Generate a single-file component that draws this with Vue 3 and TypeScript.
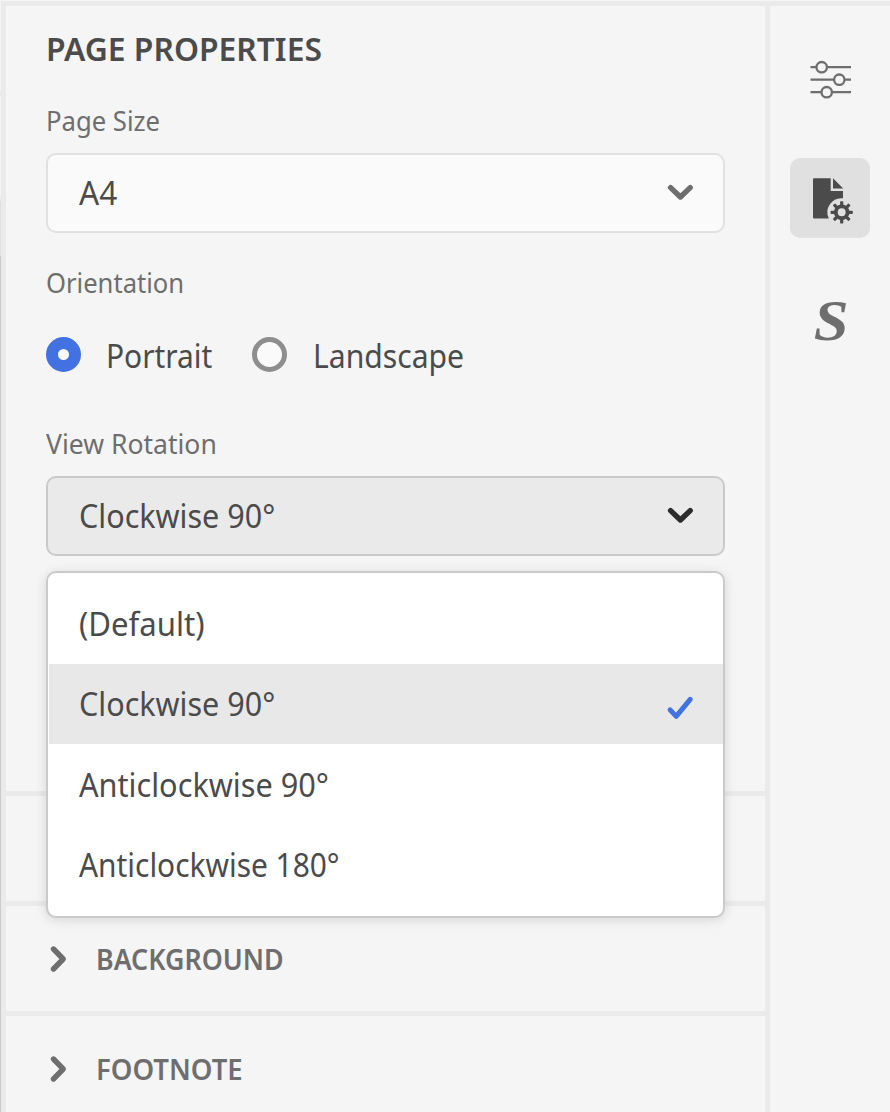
<script setup lang="ts">
import { ref } from 'vue'

interface Option { label: string; width: number }

// Compresses a label horizontally so it occupies the given width.
const vFit = {
  mounted(el: HTMLElement, binding: { value: number }) {
    el.style.transform = `scaleX(${binding.value / el.offsetWidth})`
  },
}

const orientation = ref('Portrait')
const orientations: Option[] = [
  { label: 'Portrait', width: 106.5 },
  { label: 'Landscape', width: 151.5 },
]
const rotation = ref('Clockwise 90°')
const rotations: Option[] = [
  { label: '(Default)', width: 125.5 },
  { label: 'Clockwise 90°', width: 196.5 },
  { label: 'Anticlockwise 90°', width: 250 },
  { label: 'Anticlockwise 180°', width: 260.5 },
]
const sections: Option[] = [
  { label: 'BACKGROUND', width: 187.5 },
  { label: 'FOOTNOTE', width: 146.5 },
]
const teeth = [0, 45, 90, 135, 180, 225, 270, 315]
</script>

<template>
  <div class="app">
    <div class="edge"><i class="edge-a"></i><i class="edge-b"></i><i class="edge-c"></i><i class="edge-d"></i></div>
    <main class="panel">
      <section class="properties">
        <h2 class="title"><span v-fit="275.5" class="fit">PAGE PROPERTIES</span></h2>
        <div class="label size-label"><span v-fit="114.5" class="fit">Page Size</span></div>
        <div class="select">
          <span v-fit="38.5" class="fit">A4</span>
          <svg class="chevron" width="28" height="20" viewBox="0 0 28 20"><path d="M4.6 4.6 14.4 14 24.2 4.6" /></svg>
        </div>
        <div class="label orientation-label"><span v-fit="138" class="fit">Orientation</span></div>
        <div class="radios">
          <div v-for="o in orientations" :key="o.label" class="radio" @click="orientation = o.label">
            <span class="dot" :class="{ on: orientation === o.label }"></span>
            <span v-fit="o.width" class="fit">{{ o.label }}</span>
          </div>
        </div>
        <div class="label rotation-label"><span v-fit="170.5" class="fit">View Rotation</span></div>
        <div class="select open">
          <span v-fit="196.5" class="fit">{{ rotation }}</span>
          <svg class="chevron" width="28" height="20" viewBox="0 0 28 20"><path d="M4.6 4.6 14.4 14 24.2 4.6" /></svg>
          <div class="menu">
            <div v-for="r in rotations" :key="r.label" class="item" :class="{ active: rotation === r.label }">
              <span v-fit="r.width" class="fit">{{ r.label }}</span>
              <svg v-if="rotation === r.label" class="check" width="28" height="26" viewBox="0 0 28 26"><path d="M4.1 14.9 10.2 21.4 24.2 4.3" /></svg>
            </div>
          </div>
        </div>
      </section>
      <section class="section"></section>
      <section v-for="s in sections" :key="s.label" class="section">
        <svg class="arrow" width="20" height="28" viewBox="0 0 20 28"><path d="M5.5 4 15.2 14 5.5 24" /></svg>
        <span v-fit="s.width" class="fit">{{ s.label }}</span>
      </section>
    </main>
    <aside class="rail">
      <div class="tool">
        <svg width="80" height="80" viewBox="0 0 80 80" fill="none" stroke="#6e6e6e" stroke-width="2.3">
          <path d="M20.5 29.1h6M37 29.1h24M20.5 41.6h23.5M54 41.6h7M20.5 54.1h11M42 54.1h19" />
          <circle cx="31.7" cy="29.2" r="5.2" /><circle cx="49.3" cy="41.7" r="5.2" /><circle cx="36.7" cy="54.2" r="5.2" />
        </svg>
      </div>
      <div class="tool selected">
        <svg width="80" height="80" viewBox="0 0 80 80" fill="#4b4b4b">
          <path d="M24 20.2H40.7V33H53V40.3A14 14 0 0 0 38.9 60.5H24a1 1 0 0 1-1-1V21.2a1 1 0 0 1 1-1Z" />
          <path d="M43 20.2 53 30.2V30.5H43Z" />
          <circle cx="51.7" cy="54.3" r="5.9" fill="none" stroke="#4b4b4b" stroke-width="3.9" />
          <rect v-for="a in teeth" :key="a" x="50.1" y="43.2" width="3.2" height="4.5" rx=".7" :transform="`rotate(${a} 51.7 54.3)`" />
        </svg>
      </div>
      <div class="tool style-tool"><span>S</span></div>
    </aside>
  </div>
</template>

<style>
body { margin: 0; background: #f5f5f5; overflow: hidden; }
</style>

<style scoped>
.app { box-sizing: border-box; width: 890px; height: 1112px; padding-top: 1px; display: flex; overflow: hidden; background: #f5f5f5; color: #4b4b4b; font: 32px/40px "Noto Sans", "Open Sans", sans-serif; }
.fit { display: inline-block; flex: none; white-space: nowrap; transform-origin: left center; }
.edge { width: 1px; flex: none; display: flex; flex-direction: column; }
.edge i { display: block; }
.edge-a { height: 90px; background: #f5f5f5; }
.edge-b { height: 110px; border-top: 5px solid #eaeaea; border-bottom: 5px solid #eaeaea; box-sizing: border-box; }
.edge-c { height: 55px; background: #dedede; }
.edge-d { flex: 1; background: #cacaca; }
.panel { box-sizing: border-box; width: 769px; flex: none; border: 5px solid #eaeaea; border-bottom: 0; }
.properties { box-sizing: border-box; height: 790px; padding: 23px 40px 0; border-bottom: 5px solid #eaeaea; display: flex; flex-direction: column; align-items: flex-start; }
.title { margin: 0; font-size: 32px; line-height: 40px; font-weight: 600; }
.label { font-size: 28px; line-height: 36px; color: #6e6e6e; }
.size-label { margin: 33px 0 15px; }
.select { box-sizing: border-box; position: relative; width: 679px; height: 80px; border: 2px solid #e1e1e1; border-radius: 10px; background: #fafafa; display: flex; align-items: center; justify-content: space-between; padding: 0 29px 0 31px; }
.select.open { background: #eaeaea; border-color: #cacaca; }
.chevron { flex: none; }
.chevron path, .arrow path, .check path { fill: none; stroke: #6e6e6e; stroke-width: 5.4; stroke-linecap: round; stroke-linejoin: round; }
.open .chevron path { stroke: #2c2c2c; }
.orientation-label { margin-top: 31px; }
.radios { display: flex; gap: 40px; margin-top: 34px; height: 40px; }
.radio { display: flex; align-items: center; width: 166px; }
.radio .fit { margin-left: 25px; margin-top: 4px; }
.radio + .radio .fit { margin-left: 26px; }
.dot { box-sizing: border-box; width: 35px; height: 35px; flex: none; border: 5px solid #8e8e8e; border-radius: 50%; background: #fafafa; }
.dot.on { border: 12px solid #4272e1; }
.rotation-label { margin: 51px 0 15px; }
.menu { box-sizing: border-box; position: absolute; z-index: 2; left: -2px; top: 93px; width: 679px; height: 347px; padding: 11px 0; background: #fff; border: 2px solid #cacaca; border-radius: 10px; box-shadow: 0 2px 12px rgba(0, 0, 0, .13); }
.item { box-sizing: border-box; height: 80px; margin-left: 1px; padding: 0 29px 0 30px; display: flex; align-items: center; justify-content: space-between; }
.item:nth-child(n+3) .fit { margin-top: 2px; }
.item.active { background: #e8e8e8; }
.check { margin-top: 7px; }
.check path { stroke: #4272e1; stroke-width: 5; }
.section { box-sizing: border-box; height: 110px; border-bottom: 5px solid #eaeaea; padding-left: 42px; display: flex; align-items: center; font-size: 28px; font-weight: 600; color: #6e6e6e; }
.section .fit { margin-left: 27.5px; margin-top: 1px; }
.rail { box-sizing: border-box; width: 120px; border-top: 5px solid #eaeaea; padding: 32px 20px; display: flex; flex-direction: column; gap: 40px; }
.tool { width: 80px; height: 80px; flex: none; border-radius: 10px; }
.tool svg { display: block; }
.selected { background: #e0e0e0; }
.style-tool { font: italic bold 58px/80px "Liberation Serif", serif; color: #6e6e6e; text-align: center; }
.style-tool span { display: inline-block; margin: 3px 0 0 2px; transform: scaleX(1.08); }
</style>
